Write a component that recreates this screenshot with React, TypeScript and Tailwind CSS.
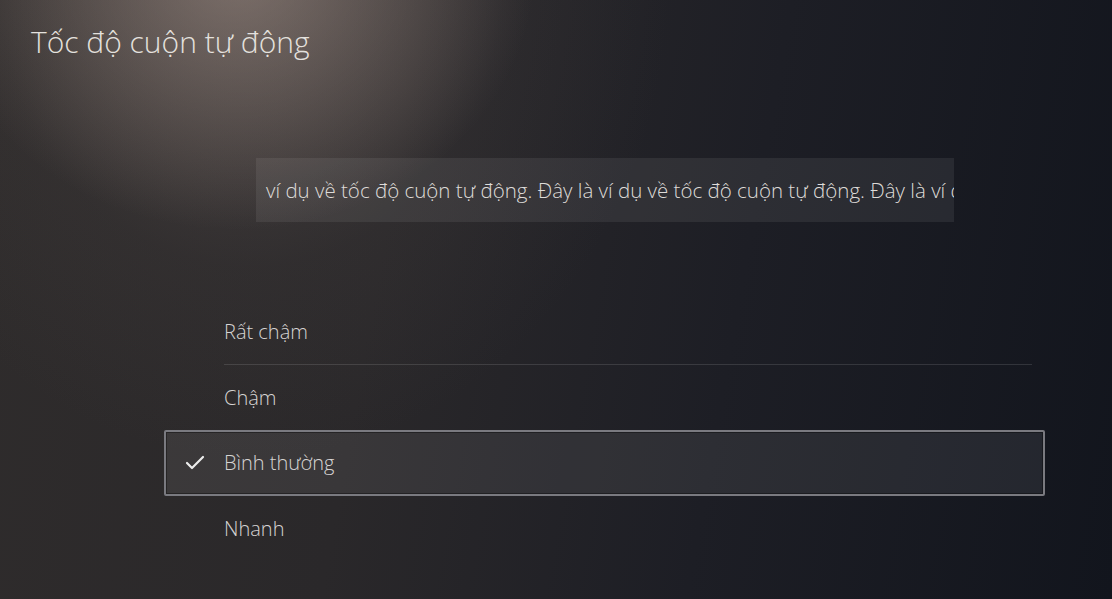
import { Check } from 'lucide-react'

const speeds = [
  { id: 'very-slow', label: 'Rất chậm' },
  { id: 'slow', label: 'Chậm' },
  { id: 'normal', label: 'Bình thường' },
  { id: 'fast', label: 'Nhanh' },
]

const sample =
  'ví dụ về tốc độ cuộn tự động. Đây là ví dụ về tốc độ cuộn tự động. Đây là ví dụ về tốc độ cuộn tự động.'

export default function App() {
  const selected = 'normal'

  return (
    <div
      className="relative h-[599px] w-[1112px] overflow-hidden bg-[radial-gradient(ellipse_300px_260px_at_235px_-30px,rgba(180,160,150,0.45),transparent_100%),radial-gradient(ellipse_420px_480px_at_250px_-20px,rgba(140,125,118,0.35),rgba(90,82,80,0.12)_60%,transparent_100%),linear-gradient(100deg,#2f2c2c_0%,#2a282a_35%,#1d1e25_65%,#12151d_100%)] text-[#e4e1de]"
      style={{ fontFamily: '"Open Sans", "Noto Sans", sans-serif' }}
    >
      <h1 className="pl-[31px] pt-[21px] text-[30px] font-light leading-[42px]">Tốc độ cuộn tự động</h1>

      {/* scrolling preview strip */}
      <div className="ml-[256px] mt-[95px] flex h-[64px] w-[698px] items-center overflow-hidden bg-white/[0.07] pl-[10px]">
        <p className="whitespace-nowrap text-[20.5px] font-light text-[#dedbd8]">{sample}</p>
      </div>

      <ul className="ml-[164px] mt-[77px] w-[881px]">
        {speeds.map((s, i) => {
          const active = s.id === selected
          const next = speeds[i + 1]
          const divider = !active && next && next.id !== selected
          return (
            <li key={s.id}>
              <div
                className={`flex items-center ${
                  active
                    ? 'h-[66px] rounded-[2px] border-2 border-[#7a7a80] bg-white/[0.07] shadow-[inset_0_0_0_1px_rgba(0,0,0,0.35)]'
                    : 'h-[65px] border-2 border-transparent'
                }`}
              >
                <span className="flex w-[58px] justify-center">
                  {active && <Check size={24} strokeWidth={2.2} className="text-[#ececec]" />}
                </span>
                <span className="text-[20px] font-light text-[#d6d4d3]">{s.label}</span>
              </div>
              {divider && <div className="ml-[60px] mr-[13px] h-px bg-white/[0.12]" />}
            </li>
          )
        })}
      </ul>
    </div>
  )
}
